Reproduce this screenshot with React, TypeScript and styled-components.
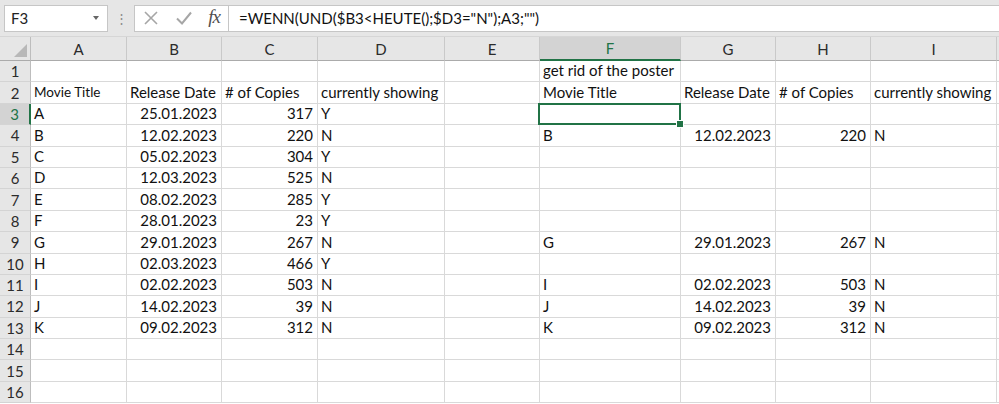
import React from "react";
import styled, { createGlobalStyle, css } from "styled-components";

const GlobalStyle = createGlobalStyle`
  html, body { margin: 0; padding: 0; background: #ffffff; }
  body { font-family: Lato, "Open Sans", "Liberation Sans", sans-serif; }
  * { box-sizing: border-box; }
`;

const FONT = `Lato, "Open Sans", "Liberation Sans", sans-serif`;
const GREEN = "#217346";

const Page = styled.div`
  width: 999px;
  height: 404px;
  overflow: hidden;
  background: #fff;
`;

const FormulaBar = styled.div`
  display: flex;
  align-items: center;
  height: 37px;
  padding: 4px 0 4px 4px;
  background: #e6e6e6;
  border-bottom: 1px solid #d6d6d6;
`;

const NameBox = styled.div`
  display: flex;
  align-items: center;
  justify-content: space-between;
  width: 104px;
  height: 27px;
  padding: 0 8px 0 6px;
  background: #fff;
  border: 1px solid #c6c6c6;
  font: 15px ${FONT};
  color: #222;
`;

const Caret = styled.span`
  width: 0;
  height: 0;
  border-left: 3px solid transparent;
  border-right: 3px solid transparent;
  border-top: 4px solid #666;
`;

const Grip = styled.div`
  width: 26px;
  text-align: center;
  color: #8a8a8a;
  font: 13px ${FONT};
`;

const IconBox = styled.div`
  display: flex;
  align-items: center;
  justify-content: space-between;
  width: 94px;
  height: 27px;
  padding: 0 8px 0 8px;
  background: #fff;
  border: 1px solid #c6c6c6;
  border-right: none;
`;

const Fx = styled.span`
  font: italic 19px "Liberation Serif", serif;
  color: #505050;
  letter-spacing: -1px;
  margin-top: -2px;
`;

const FormulaInput = styled.div`
  flex: 1;
  height: 27px;
  display: flex;
  align-items: center;
  padding-left: 10px;
  background: #fff;
  border: 1px solid #c6c6c6;
  border-right: none;
  font: 15px ${FONT};
  color: #111;
  white-space: pre;
`;

const Sheet = styled.div`
  display: grid;
  grid-template-columns: 31px 96px 95px 96px 127px 95px 141px 95px 95px 126px 40px;
  grid-template-rows: 24px;
  grid-auto-rows: 21.4px;
  font: 15px ${FONT};
  color: #111;
`;

const Corner = styled.div`
  position: relative;
  background: #e6e6e6;
  border-right: 1px solid #bdbdbd;
  border-bottom: 1px solid #ababab;
  &::after {
    content: "";
    position: absolute;
    right: 3px;
    bottom: 3px;
    width: 0;
    height: 0;
    border-left: 13px solid transparent;
    border-bottom: 13px solid #b8b8b8;
  }
`;

const ColHead = styled.div<{ $active?: boolean }>`
  display: flex;
  align-items: center;
  justify-content: center;
  background: #e6e6e6;
  border-right: 1px solid #c9c9c9;
  border-bottom: 1px solid #ababab;
  color: #2b2b2b;
  font-size: 15px;
  ${(p) =>
    p.$active &&
    css`
      background: #d3d3d3;
      color: ${GREEN};
      border-bottom: 2px solid ${GREEN};
    `}
`;

const RowHead = styled.div<{ $active?: boolean }>`
  display: flex;
  align-items: center;
  justify-content: center;
  background: #e6e6e6;
  border-right: 1px solid #bdbdbd;
  border-bottom: 1px solid #d4d4d4;
  color: #2b2b2b;
  font-size: 15px;
  ${(p) =>
    p.$active &&
    css`
      background: #d3d3d3;
      color: ${GREEN};
      border-right: 2px solid ${GREEN};
    `}
`;

const Cell = styled.div<{ $right?: boolean; $small?: boolean; $selected?: boolean }>`
  position: relative;
  display: flex;
  align-items: flex-end;
  justify-content: ${(p) => (p.$right ? "flex-end" : "flex-start")};
  padding: 0 4px 1px 3px;
  border-right: 1px solid #d9d9d9;
  border-bottom: 1px solid #d9d9d9;
  white-space: nowrap;
  overflow: visible;
  font-size: ${(p) => (p.$small ? "13.5px" : "15px")};
  line-height: 19px;
  z-index: 1;
  ${(p) =>
    p.$selected &&
    css`
      z-index: 2;
      &::before {
        content: "";
        position: absolute;
        left: -2px;
        top: -1px;
        right: -1px;
        bottom: -1px;
        border: 2px solid ${GREEN};
      }
      &::after {
        content: "";
        position: absolute;
        right: -4px;
        bottom: -4px;
        width: 6px;
        height: 6px;
        background: ${GREEN};
        border: 1px solid #fff;
      }
    `}
`;

const Spill = styled.span`
  position: relative;
  z-index: 3;
`;

const COLS = ["A", "B", "C", "D", "E", "F", "G", "H", "I", ""];

const movies: [string, string, number, string][] = [
  ["A", "25.01.2023", 317, "Y"],
  ["B", "12.02.2023", 220, "N"],
  ["C", "05.02.2023", 304, "Y"],
  ["D", "12.03.2023", 525, "N"],
  ["E", "08.02.2023", 285, "Y"],
  ["F", "28.01.2023", 23, "Y"],
  ["G", "29.01.2023", 267, "N"],
  ["H", "02.03.2023", 466, "Y"],
  ["I", "02.02.2023", 503, "N"],
  ["J", "14.02.2023", 39, "N"],
  ["K", "09.02.2023", 312, "N"],
];

// rows where the poster can go (date before "today", not showing)
const toRemove = ["B", "G", "I", "J", "K"];

type CellData = { text?: string; right?: boolean; small?: boolean };

function buildRow(r: number): CellData[] {
  const row: CellData[] = Array.from({ length: 10 }, () => ({}));
  if (r === 1) {
    row[5] = { text: "get rid of the poster" };
  } else if (r === 2) {
    row[0] = { text: "Movie Title", small: true };
    row[1] = { text: "Release Date" };
    row[2] = { text: "# of Copies" };
    row[3] = { text: "currently showing" };
    row[5] = { text: "Movie Title" };
    row[6] = { text: "Release Date" };
    row[7] = { text: "# of Copies" };
    row[8] = { text: "currently showing" };
  } else if (r >= 3 && r <= 13) {
    const [t, d, n, s] = movies[r - 3];
    row[0] = { text: t };
    row[1] = { text: d, right: true };
    row[2] = { text: String(n), right: true };
    row[3] = { text: s };
    if (toRemove.includes(t)) {
      row[5] = { text: t };
      row[6] = { text: d, right: true };
      row[7] = { text: String(n), right: true };
      row[8] = { text: s };
    }
  }
  return row;
}

const CrossIcon = () => (
  <svg width="16" height="16" viewBox="0 0 16 16">
    <path d="M2 2 L14 14 M14 2 L2 14" stroke="#a6a6a6" strokeWidth="1.6" fill="none" />
  </svg>
);

const CheckIcon = () => (
  <svg width="18" height="16" viewBox="0 0 18 16">
    <path d="M2 8.5 L7 13.5 L16 2.5" stroke="#a6a6a6" strokeWidth="2" fill="none" />
  </svg>
);

export default function App() {
  return (
    <Page>
      <GlobalStyle />
      <FormulaBar>
        <NameBox>
          F3
          <Caret />
        </NameBox>
        <Grip>⋮</Grip>
        <IconBox>
          <CrossIcon />
          <CheckIcon />
          <Fx>fx</Fx>
        </IconBox>
        <FormulaInput>{'=WENN(UND($B3<HEUTE();$D3="N");A3;"")'}</FormulaInput>
      </FormulaBar>
      <Sheet>
        <Corner />
        {COLS.map((c, i) => (
          <ColHead key={i} $active={c === "F"}>
            {c}
          </ColHead>
        ))}
        {Array.from({ length: 16 }, (_, i) => i + 1).map((r) => (
          <React.Fragment key={r}>
            <RowHead $active={r === 3}>{r}</RowHead>
            {buildRow(r).map((cell, ci) => (
              <Cell
                key={ci}
                $right={cell.right}
                $small={cell.small}
                $selected={r === 3 && ci === 5}
              >
                {cell.text && <Spill>{cell.text}</Spill>}
              </Cell>
            ))}
          </React.Fragment>
        ))}
      </Sheet>
    </Page>
  );
}
